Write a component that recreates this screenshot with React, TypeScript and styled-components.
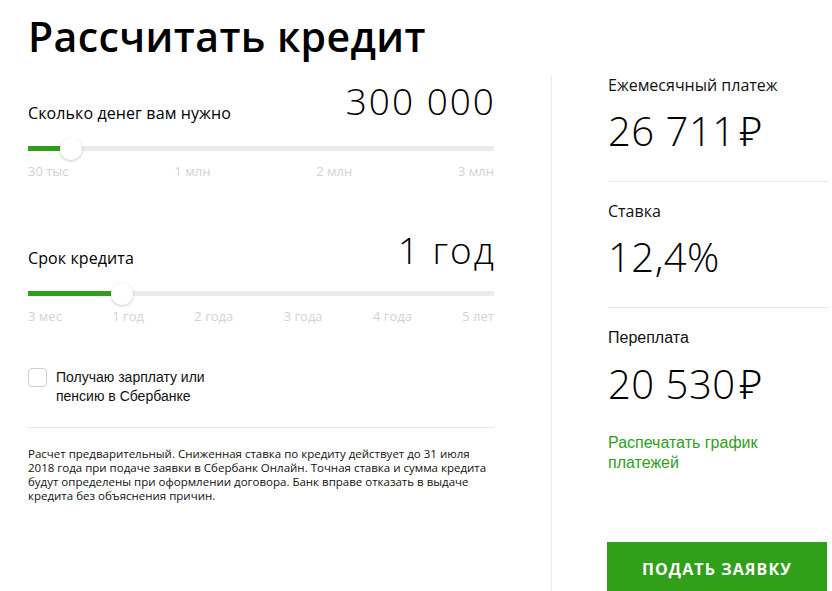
import React, { useState } from "react";
import styled, { createGlobalStyle } from "styled-components";

const GlobalStyle = createGlobalStyle`
  html, body { margin: 0; padding: 0; background: #fff; overflow: hidden; }
  body { font-family: "Open Sans", "Liberation Sans", sans-serif; color: #000; }
  * { box-sizing: border-box; }
`;

const Page = styled.div`
  display: flex;
  align-items: flex-start;
  padding-left: 28px;
  width: 832px;
  height: 591px;
`;

const LeftCol = styled.div`
  width: 466px;
  display: flex;
  flex-direction: column;
`;

const Title = styled.h1`
  margin: 11px 0 0;
  font-size: 41px;
  line-height: 50px;
  font-weight: 600;
  letter-spacing: 0.4px;
`;

const FieldRow = styled.div<{ $mt: number; $align: "flex-end" | "baseline" }>`
  display: flex;
  justify-content: space-between;
  align-items: ${(p) => p.$align};
  margin-top: ${(p) => p.$mt}px;
`;

const FieldLabel = styled.span`
  font-size: 16px;
  line-height: 20px;
  letter-spacing: 0.1px;
`;

const FieldValue = styled.span`
  font-size: 37px;
  line-height: 44px;
  font-weight: 300;
  letter-spacing: 2px;
  margin-right: -2px;
`;

const TrackWrap = styled.div<{ $mt: number }>`
  position: relative;
  margin-top: ${(p) => p.$mt}px;
  height: 5px;
  background: #ebebeb;
`;

const TrackFill = styled.div`
  height: 100%;
  background: #2f9e1b;
`;

const Thumb = styled.div`
  position: absolute;
  top: 50%;
  width: 22px;
  height: 22px;
  margin: -11px 0 0 -11px;
  border-radius: 50%;
  background: #fff;
  box-shadow: 0 1px 3px rgba(0, 0, 0, 0.22);
`;

const Ticks = styled.div<{ $mt: number }>`
  display: flex;
  justify-content: space-between;
  margin-top: ${(p) => p.$mt}px;
  font-size: 13px;
  line-height: 18px;
  color: #d2d2d2;
`;

const CheckRow = styled.label`
  display: flex;
  align-items: flex-start;
  gap: 9px;
  margin-top: 43px;
  cursor: pointer;
`;

const Box = styled.span<{ $on: boolean }>`
  flex: none;
  width: 19px;
  height: 19px;
  border: 1px solid #cfcfcf;
  border-radius: 4px;
  background: ${(p) => (p.$on ? "#2f9e1b" : "#fff")};
`;

const CheckText = styled.span`
  font-family: "Liberation Sans", Arial, sans-serif;
  font-size: 14px;
  line-height: 19px;
  color: #111;
`;

const Rule = styled.div<{ $mt: number }>`
  height: 1px;
  background: #e8e8e8;
  margin-top: ${(p) => p.$mt}px;
`;

const Disclaimer = styled.p`
  margin: 19px 0 0;
  font-size: 11.5px;
  line-height: 14px;
  color: #111;
`;

const RightCol = styled.div`
  margin: 75px 0 0 57px;
  border-left: 1px solid #ebebeb;
  padding-left: 56px;
  width: 276px;
  height: 516px;
  display: flex;
  flex-direction: column;
`;

const ResLabel = styled.div<{ $arial?: boolean; $mt?: number }>`
  margin-top: ${(p) => p.$mt ?? 0}px;
  font-family: ${(p) =>
    p.$arial ? `"Liberation Sans", Arial, sans-serif` : `"Open Sans", sans-serif`};
  font-size: 16px;
  line-height: 20px;
  color: #111;
`;

const ResValue = styled.div`
  margin-top: 12px;
  font-size: 40px;
  line-height: 48px;
  font-weight: 300;
  letter-spacing: 0.5px;
  white-space: nowrap;
`;

const Ruble = styled.span`
  font-family: "Noto Sans", "DejaVu Sans", sans-serif;
  font-weight: 300;
  margin-left: 4px;
`;

const Divider = styled.div`
  height: 1px;
  background: #e8e8e8;
  margin-top: 26px;
  margin-right: -1px;
`;

const PrintLink = styled.a`
  margin-top: 25px;
  font-family: "Liberation Sans", Arial, sans-serif;
  font-size: 16px;
  line-height: 20px;
  color: #2f9e1b;
  text-decoration: none;
  cursor: pointer;
`;

const SubmitButton = styled.button`
  margin-top: auto;
  margin-left: -1px;
  margin-bottom: -5px;
  height: 54px;
  width: 220px;
  border: 0;
  background: #30a01a;
  color: #fff;
  font-family: "Open Sans", sans-serif;
  font-weight: 700;
  font-size: 16px;
  letter-spacing: 1.1px;
  cursor: pointer;
`;

type SliderProps = {
  label: string;
  value: string;
  percent: number;
  ticks: string[];
  rowMt: number;
  trackMt: number;
  tickMt: number;
  align: "flex-end" | "baseline";
};

function Slider({ label, value, percent, ticks, rowMt, trackMt, tickMt, align }: SliderProps) {
  return (
    <>
      <FieldRow $mt={rowMt} $align={align}>
        <FieldLabel>{label}</FieldLabel>
        <FieldValue>{value}</FieldValue>
      </FieldRow>
      <TrackWrap $mt={trackMt}>
        <TrackFill style={{ width: `${percent}%` }} />
        <Thumb style={{ left: `${percent}%` }} />
      </TrackWrap>
      <Ticks $mt={tickMt}>
        {ticks.map((t) => (
          <span key={t}>{t}</span>
        ))}
      </Ticks>
    </>
  );
}

export default function App() {
  const [salary, setSalary] = useState(false);
  return (
    <>
      <GlobalStyle />
      <Page>
        <LeftCol>
          <Title>Рассчитать кредит</Title>
          <Slider
            label="Сколько денег вам нужно"
            value="300 000"
            percent={9.2}
            ticks={["30 тыс", "1 млн", "2 млн", "3 млн"]}
            rowMt={18}
            trackMt={23}
            tickMt={11}
            align="flex-end"
          />
          <Slider
            label="Срок кредита"
            value="1 год"
            percent={20.2}
            ticks={["3 мес", "1 год", "2 года", "3 года", "4 года", "5 лет"]}
            rowMt={48}
            trackMt={19}
            tickMt={11}
            align="baseline"
          />
          <CheckRow onClick={() => setSalary(!salary)}>
            <Box $on={salary} />
            <CheckText>
              Получаю зарплату или
              <br />
              пенсию в Сбербанке
            </CheckText>
          </CheckRow>
          <Rule $mt={21} />
          <Disclaimer>
            Расчет предварительный. Сниженная ставка по кредиту действует до 31 июля 2018 года
            при подаче заявки в Сбербанк Онлайн. Точная ставка и сумма кредита будут определены
            при оформлении договора. Банк вправе отказать в выдаче кредита без объяснения причин.
          </Disclaimer>
        </LeftCol>
        <RightCol>
          <ResLabel>Ежемесячный платеж</ResLabel>
          <ResValue>
            26 711<Ruble>₽</Ruble>
          </ResValue>
          <Divider />
          <ResLabel $mt={19}>Ставка</ResLabel>
          <ResValue>12,4%</ResValue>
          <Divider />
          <ResLabel $arial $mt={20}>Переплата</ResLabel>
          <ResValue>
            20 530<Ruble>₽</Ruble>
          </ResValue>
          <PrintLink>
            Распечатать график
            <br />
            платежей
          </PrintLink>
          <SubmitButton>ПОДАТЬ ЗАЯВКУ</SubmitButton>
        </RightCol>
      </Page>
    </>
  );
}
